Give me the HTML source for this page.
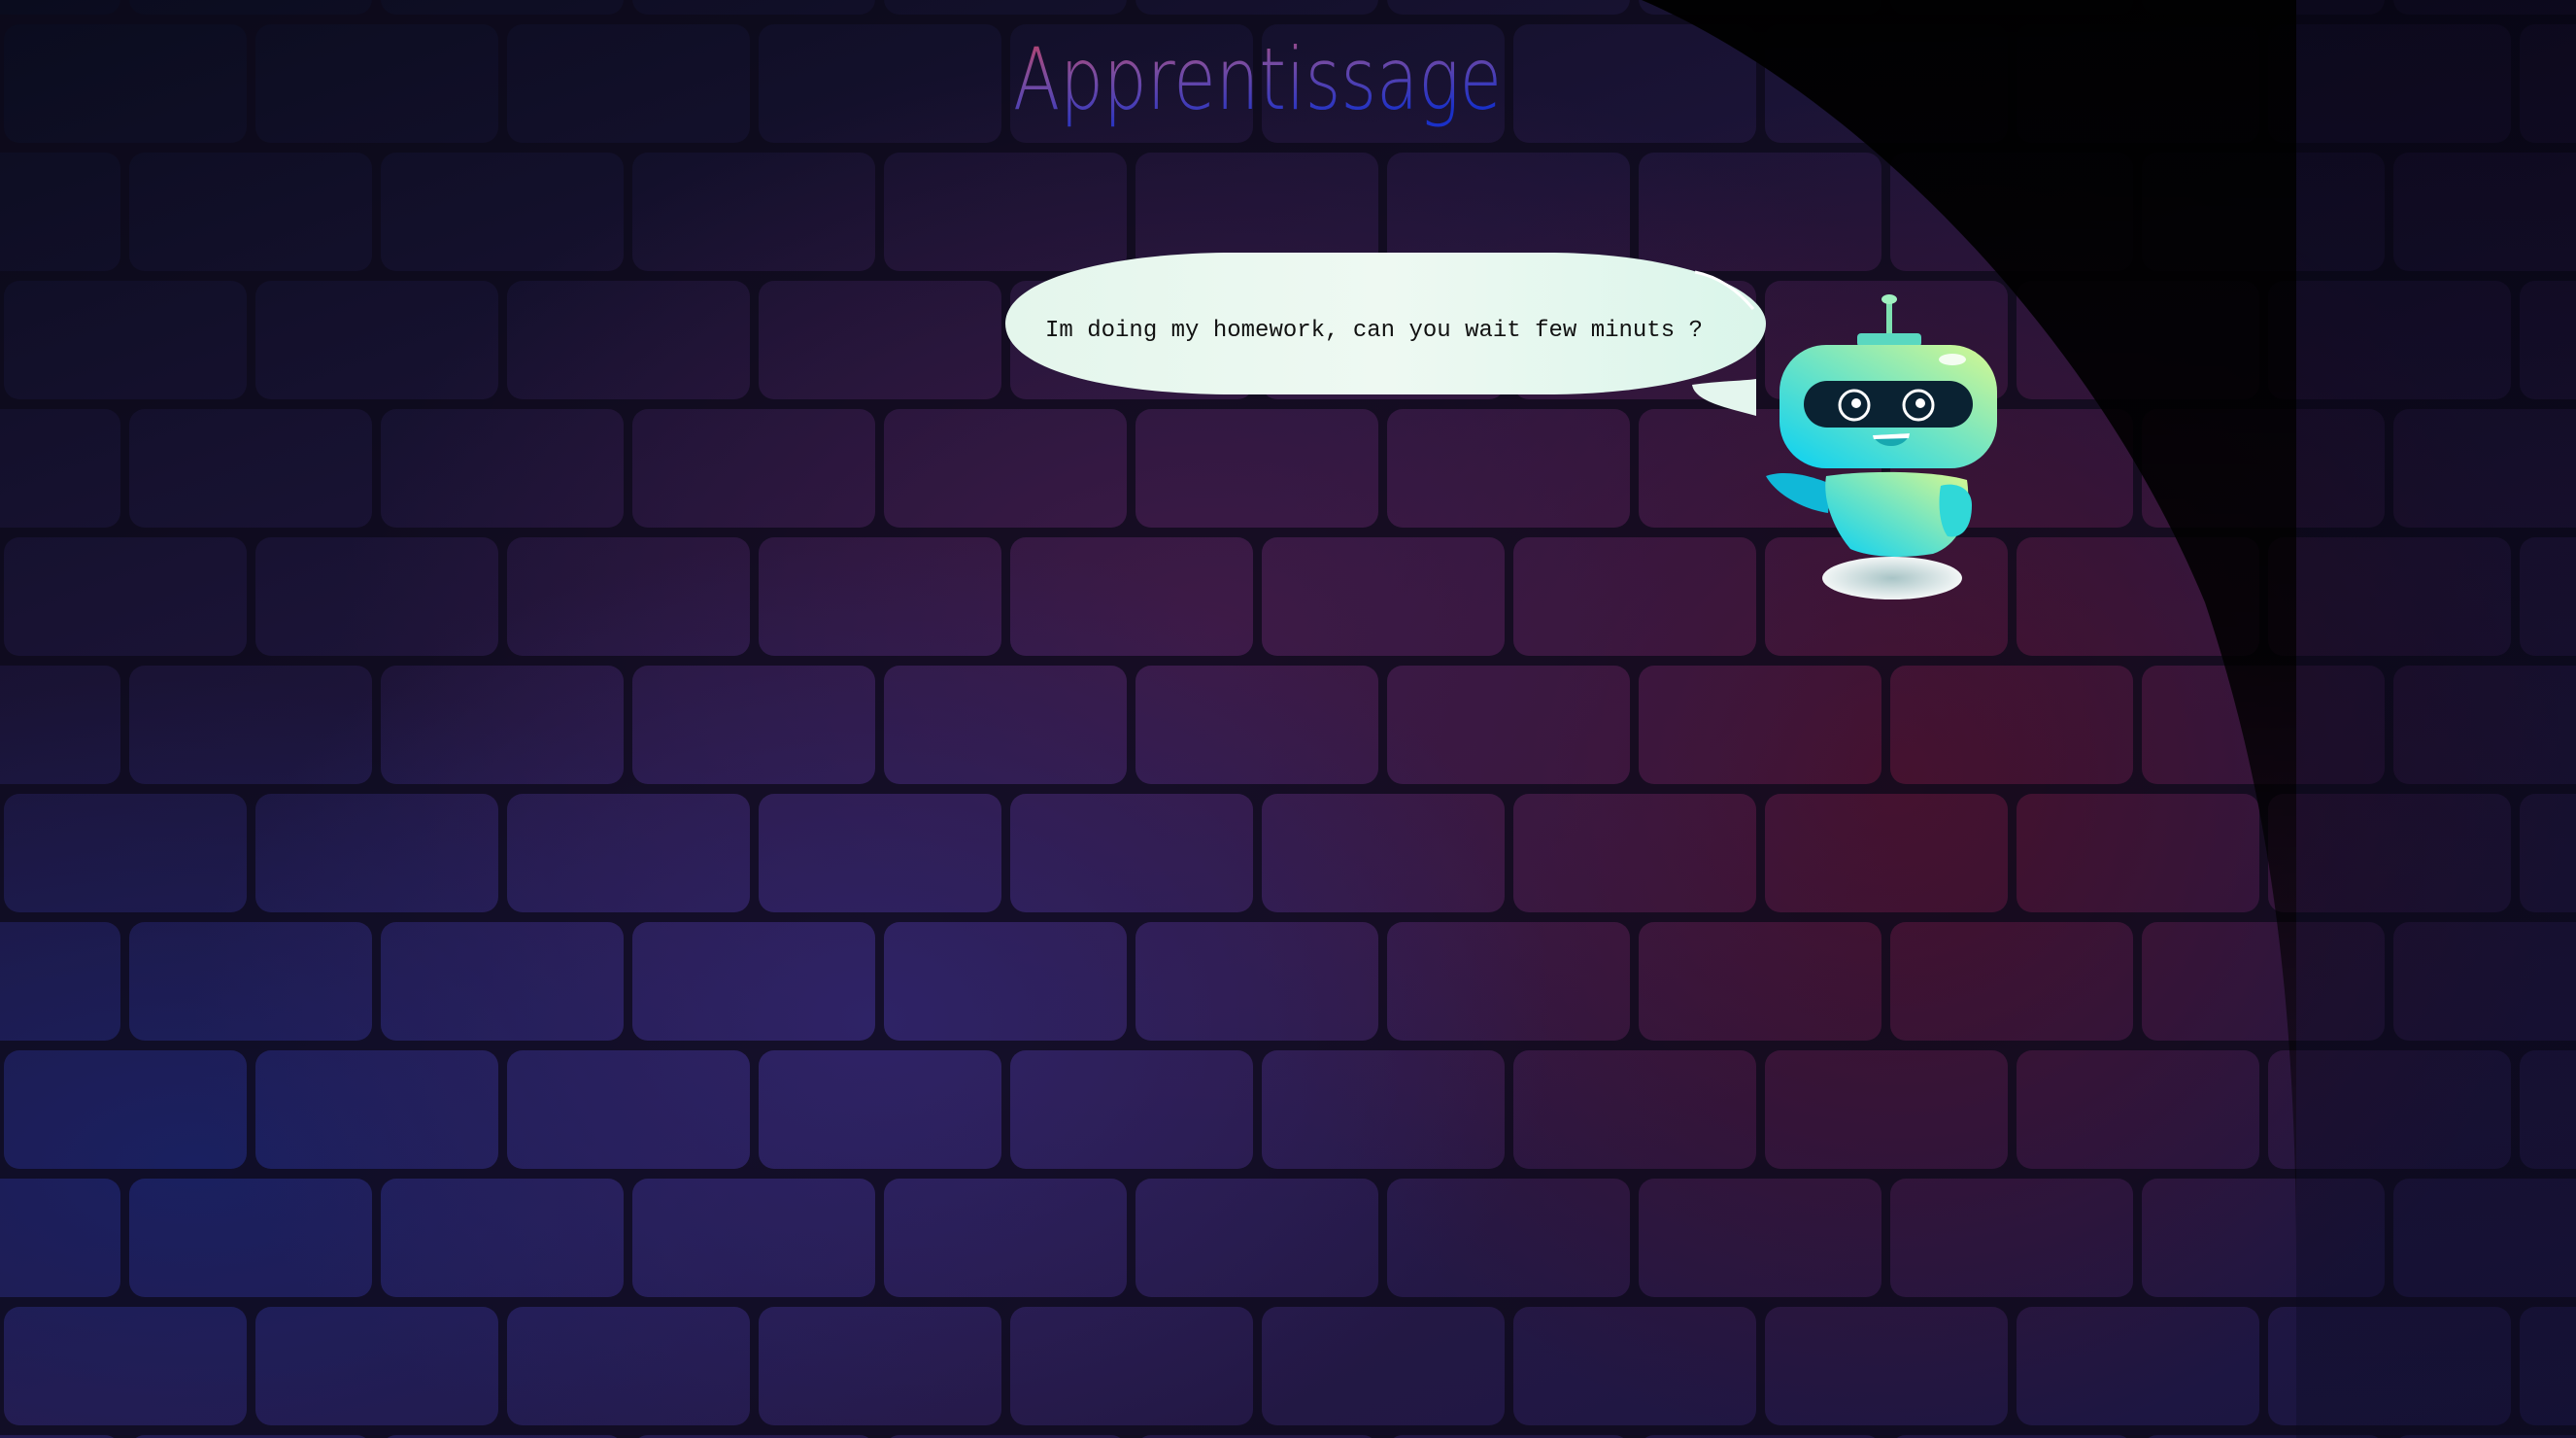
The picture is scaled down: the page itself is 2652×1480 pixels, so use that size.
<!DOCTYPE html>
<html><head><meta charset="utf-8"><style>
html,body{margin:0;padding:0;width:2652px;height:1480px;overflow:hidden;background:#120d22}
#bg{position:absolute;left:0;top:0;width:2652px;height:1480px;
background:
radial-gradient(ellipse 700px 500px at 900px 1050px, #2e2366 0%, rgba(46,35,102,0) 100%),
radial-gradient(ellipse 900px 600px at 1250px 650px, #3e1a46 0%, rgba(62,26,70,0) 100%),
radial-gradient(ellipse 700px 700px at 1950px 800px, #46102a 0%, rgba(70,16,42,0) 100%),
radial-gradient(ellipse 900px 500px at 200px 1200px, #1a2060 0%, rgba(26,32,96,0) 100%),
linear-gradient(160deg,#0a0c1e 0%,#1c1438 35%,#2a1a48 60%,#1a1540 100%);}
svg{position:absolute;left:0;top:0}
</style></head><body>
<div id="bg"></div>
<svg width="2652" height="1480" viewBox="0 0 2652 1480">
<defs>
<pattern id="bp" x="4" y="25" width="518" height="264" patternUnits="userSpaceOnUse">
<rect x="0" y="0" width="250" height="122" rx="16" fill="#000"/>
<rect x="259" y="0" width="250" height="122" rx="16" fill="#000"/>
<rect x="-130" y="132" width="250" height="122" rx="16" fill="#000"/>
<rect x="129" y="132" width="250" height="122" rx="16" fill="#000"/>
<rect x="388" y="132" width="250" height="122" rx="16" fill="#000"/>
</pattern>
<mask id="m"><rect width="2652" height="1480" fill="#fff"/><rect width="2652" height="1480" fill="url(#bp)"/></mask>
<linearGradient id="dk" x1="0" y1="0" x2="0" y2="1">
<stop offset="0" stop-color="#000" stop-opacity="0.96"/>
<stop offset="0.45" stop-color="#000" stop-opacity="0.85"/>
<stop offset="0.8" stop-color="#000" stop-opacity="0.45"/>
<stop offset="1" stop-color="#000" stop-opacity="0.25"/>
</linearGradient>
<linearGradient id="rp" x1="0" y1="0" x2="0" y2="1">
<stop offset="0" stop-color="#050410" stop-opacity="0.7"/>
<stop offset="1" stop-color="#0a0a20" stop-opacity="0.35"/>
</linearGradient>
<linearGradient id="tt" x1="0" y1="0" x2="0.4" y2="1">
<stop offset="0" stop-color="#c8405e"/>
<stop offset="0.45" stop-color="#7a4ca0"/>
<stop offset="1" stop-color="#1a30c8"/>
</linearGradient>
<linearGradient id="bub" x1="0" y1="0" x2="1" y2="0">
<stop offset="0" stop-color="#e4f6ec"/>
<stop offset="0.5" stop-color="#eef9f2"/>
<stop offset="1" stop-color="#daf5ea"/>
</linearGradient>
<linearGradient id="hd" x1="0" y1="1" x2="1" y2="0">
<stop offset="0" stop-color="#08d0f4"/>
<stop offset="0.5" stop-color="#6ee4c4"/>
<stop offset="1" stop-color="#d8f890"/>
</linearGradient>
<radialGradient id="sh"><stop offset="0" stop-color="#a8c4c6"/><stop offset="1" stop-color="#f2f6f6"/></radialGradient>
</defs>
<rect width="2652" height="1480" fill="#0d0a1a" opacity="0.78" mask="url(#m)"/>
<path d="M1690 0 C1900 90 2150 330 2270 620 C2330 800 2364 1000 2364 1300 L2364 1480 L2364 0 Z" fill="url(#dk)"/>
<rect x="2364" y="0" width="288" height="1480" fill="url(#rp)"/>
<text x="1043" y="112" font-family="DejaVu Sans, Liberation Sans, sans-serif" font-weight="200" font-size="88" textLength="503" lengthAdjust="spacingAndGlyphs" fill="url(#tt)">Apprentissage</text>
<path d="M1035 333 C1035 290 1130 262 1260 260 L1600 260 C1740 262 1818 300 1818 333 C1818 372 1740 404 1600 406 L1260 406 C1120 404 1035 375 1035 333 Z" fill="url(#bub)"/>
<path d="M1742 396 C1770 392 1795 392 1808 390 L1808 428 C1780 420 1745 414 1742 396 Z" fill="#e4f6ee"/>
<path d="M1745 280 C1770 285 1790 300 1805 318" stroke="#fff" stroke-width="3" fill="none"/>
<text x="1076" y="346" font-family="Liberation Mono, monospace" font-size="24" fill="#111">Im doing my homework, can you wait few minuts ?</text>
<ellipse cx="1948" cy="595" rx="72" ry="22" fill="url(#sh)"/>
<line x1="1945" y1="310" x2="1945" y2="347" stroke="#7ee0b0" stroke-width="6"/>
<ellipse cx="1945" cy="308" rx="8" ry="5" fill="#a0f0c0"/>
<rect x="1912" y="343" width="66" height="14" rx="4" fill="#5ad8c0"/>
<path d="M1818 490 C1840 482 1870 492 1885 498 L1882 528 C1855 524 1828 508 1818 490 Z" fill="#10b8d8"/>
<path d="M1880 490 C1920 484 1990 484 2025 494 C2030 525 2020 560 1990 570 C1960 575 1925 574 1905 565 C1888 545 1876 515 1880 490 Z" fill="url(#hd)"/>
<path d="M1998 500 C2010 496 2030 500 2030 520 C2030 545 2018 555 2005 552 C1996 540 1995 515 1998 500 Z" fill="#30d8d8"/>
<rect x="1832" y="355" width="224" height="127" rx="48" fill="url(#hd)"/>
<rect x="1857" y="392" width="174" height="48" rx="24" fill="#0a2232"/>
<circle cx="1909" cy="417" r="15" fill="none" stroke="#fff" stroke-width="3"/>
<circle cx="1911" cy="415" r="5" fill="#fff"/>
<circle cx="1975" cy="417" r="15" fill="none" stroke="#fff" stroke-width="3"/>
<circle cx="1977" cy="415" r="5" fill="#fff"/>
<path d="M1928 448 L1966 446 C1962 462 1935 464 1928 448 Z" fill="#18a8b0"/>
<path d="M1928 448 L1966 446 L1965 451 L1929 452 Z" fill="#fff"/>
<ellipse cx="2010" cy="370" rx="14" ry="6" fill="#fff" opacity="0.85"/>
</svg>
</body></html>
